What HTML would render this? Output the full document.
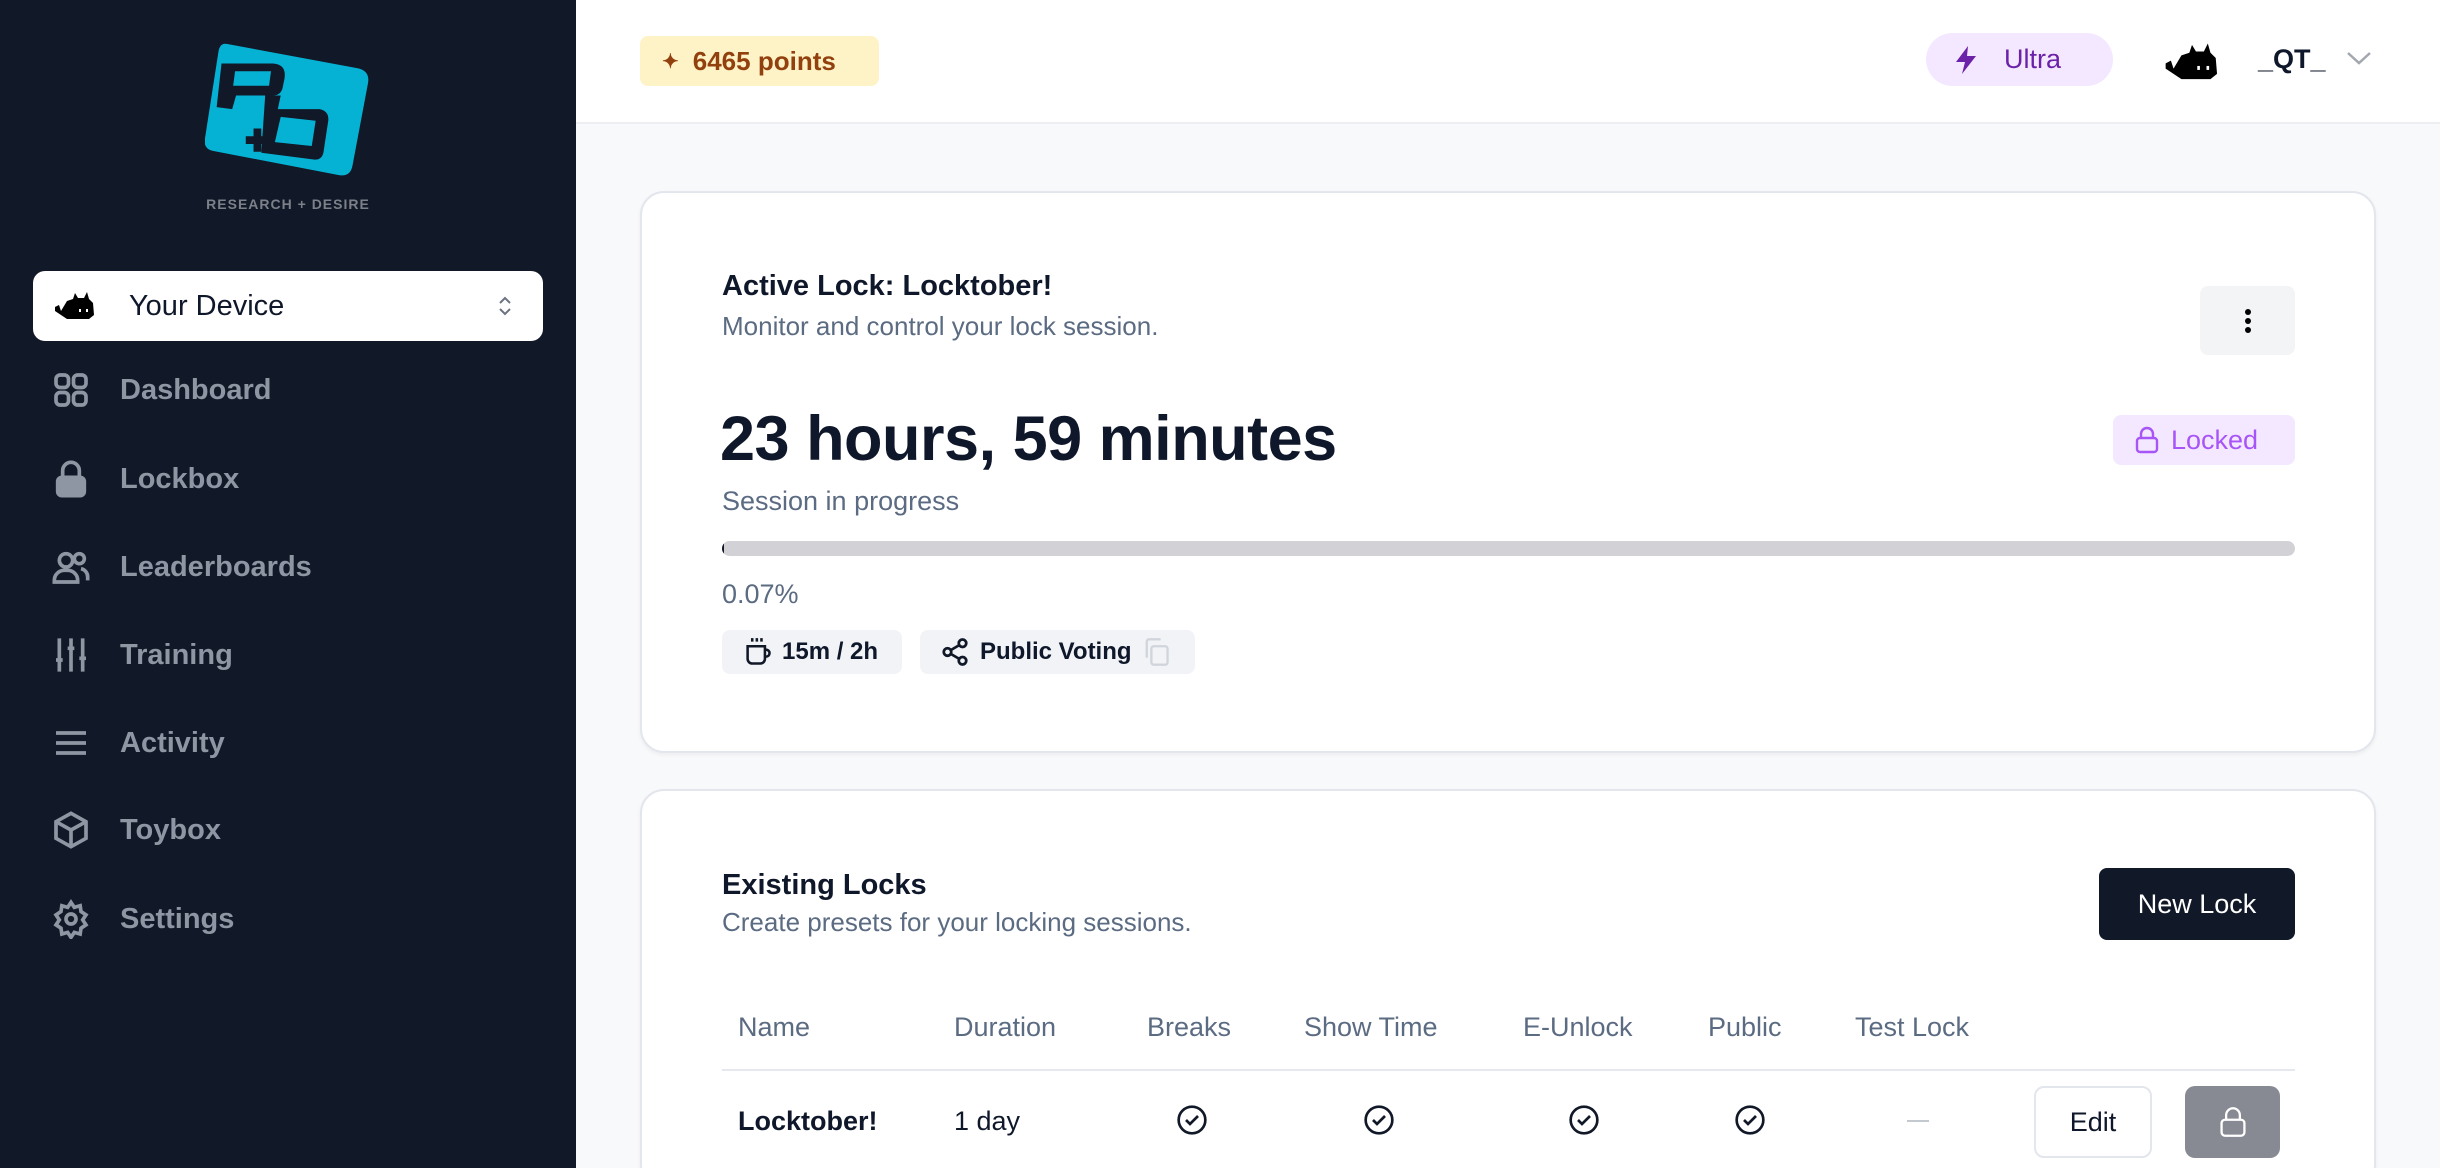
<!DOCTYPE html>
<html style="width:2440px;height:1168px;overflow:hidden"><head><meta charset="utf-8"><style>
*{box-sizing:border-box;margin:0;padding:0}
body{width:2440px;height:1168px;overflow:hidden;font-family:"Liberation Sans",sans-serif;background:#f8f9fb;position:relative;color:#0f172a}
.abs{position:absolute}
#side{left:0;top:0;width:576px;height:1168px;background:#111827}
.nav{position:absolute;left:51px;height:40px;display:flex;align-items:center;color:#8f96a3;font-size:29px;font-weight:bold}
.nav svg{width:40px;height:40px;margin-right:29px;stroke:#8f96a3;fill:none;stroke-width:2.2}
#top{left:576px;top:0;width:1864px;height:124px;background:#fff;border-bottom:2px solid #eceef2}
.card{position:absolute;left:640px;width:1736px;background:#fff;border:2px solid #e3e6ec;border-radius:24px;box-shadow:0 2px 4px rgba(0,0,0,.05)}
.th{position:absolute;top:1012px;font-size:27px;color:#5b6b82}
.chk{position:absolute;top:1104px;width:32px;height:32px}
</style></head><body>
<div id="side" class="abs">
 <svg class="abs" style="left:205px;top:38px" width="165" height="148" viewBox="0 0 170 150">
  <path d="M23 5 L158 30 Q170 33 168 45 L152 130 Q150 142 138 140 L8 115 Q-2 113 0 102 L14 12 Q16 3 23 5Z" fill="#06b2d4"/>
  <path d="M12 70 L17 25 L70 25 Q84 26 82 40 L80 50 Q78 58 70 58 L32 58 L28 72 Z" fill="#111827"/>
  <path d="M31 33 L68 33 L66 48 L29 48 Z" fill="#06b2d4"/>
  <path d="M62 58 L78 58 L75 72 L118 72 Q128 74 127 84 L122 117 Q120 125 112 124 L58 117 Z" fill="#111827"/>
  <path d="M78 80 L114 84 L110 110 L72 106 Z" fill="#06b2d4"/>
  <path d="M42 100 h8 v-8 h8 v8 h8 v8 h-8 v8 h-8 v-8 h-8z" fill="#111827"/>
 </svg>
 <div class="abs" style="left:0;width:576px;top:196px;text-align:center;color:#7b8089;font-size:14px;font-weight:bold;letter-spacing:1px">RESEARCH + DESIRE</div>
 <div class="abs" style="left:33px;top:271px;width:510px;height:70px;background:#fff;border-radius:12px;display:flex;align-items:center">
  <svg style="margin-left:20px" width="44" height="30" viewBox="0 0 44 30"><path d="M2 16 L6 14 L8 20 L14 10 L20 8 L22 2 L25 7 L31 7 L34 1 L36 8 L40 12 L41 24 L36 28 L14 28 L8 24 L2 20Z" fill="#000"/><rect x="26" y="18" width="2" height="3" fill="#fff"/><rect x="33" y="18" width="2" height="3" fill="#fff"/></svg>
  <span style="margin-left:32px;font-size:29px;color:#0f172a">Your Device</span>
  <svg style="position:absolute;right:30px" width="16" height="24" viewBox="0 0 16 24" fill="none" stroke="#6b7280" stroke-width="2"><path d="M3 9 L8 4 L13 9 M3 15 L8 20 L13 15"/></svg>
 </div>
 <div class="nav" style="top:370px"><svg viewBox="0 0 24 24"><rect x="3" y="3" width="7.5" height="7.5" rx="2.5"/><rect x="13.5" y="3" width="7.5" height="7.5" rx="2.5"/><rect x="3" y="13.5" width="7.5" height="7.5" rx="2.5"/><rect x="13.5" y="13.5" width="7.5" height="7.5" rx="2.5"/></svg>Dashboard</div>
 <div class="nav" style="top:459px"><svg viewBox="0 0 24 24"><path d="M7 11V7a5 5 0 0 1 10 0v4" /><rect x="4" y="11" width="16" height="11" rx="2.5" fill="#8f96a3"/></svg>Lockbox</div>
 <div class="nav" style="top:547px"><svg viewBox="0 0 24 24"><circle cx="9" cy="8" r="4"/><path d="M2 21v-1a6 6 0 0 1 6-6h2a6 6 0 0 1 6 6v1z"/><circle cx="17" cy="7" r="3"/><path d="M18 13a5 5 0 0 1 4 5v2"/></svg>Leaderboards</div>
 <div class="nav" style="top:635px"><svg viewBox="0 0 24 24"><path d="M5 2v20M12 2v20M19 2v20"/><path d="M3 15h4M10 8h4M17 14h4"/></svg>Training</div>
 <div class="nav" style="top:723px"><svg viewBox="0 0 24 24"><path d="M3 6h18M3 12h18M3 18h18"/></svg>Activity</div>
 <div class="nav" style="top:810px"><svg viewBox="0 0 24 24"><path d="M12 2l9 5v10l-9 5-9-5V7z"/><path d="M3 7l9 5 9-5M12 12v10"/></svg>Toybox</div>
 <div class="nav" style="top:899px"><svg viewBox="0 0 24 24"><circle cx="12" cy="12" r="3"/><path d="M12 2l2 3 3.5-1 .5 3.5 3 2-2 3 2 3-3 2-.5 3.5-3.5-1-2 3-2-3-3.5 1-.5-3.5-3-2 2-3-2-3 3-2 .5-3.5 3.5 1z"/></svg>Settings</div>
</div>
<div id="top" class="abs">
 <div class="abs" style="left:64px;top:36px;width:239px;height:50px;background:#fef3c7;border-radius:8px;display:flex;align-items:center;color:#92400e;font-size:26px;font-weight:bold"><span style="margin-left:22px;margin-right:14px;font-size:20px">✦</span>6465 points</div>
 <div class="abs" style="left:1350px;top:33px;width:187px;height:53px;background:#f3e8ff;border-radius:27px;display:flex;align-items:center;color:#6b21a8;font-size:27px">
  <svg style="margin-left:28px;margin-right:26px" width="24" height="30" viewBox="0 0 24 30"><path d="M14 1 L2 17 L11 17 L8 29 L22 11 L13 11 Z" fill="#6b21a8"/></svg>Ultra</div>
 <svg class="abs" style="left:1587px;top:42px" width="58" height="40" viewBox="0 0 44 30"><path d="M2 16 L6 14 L8 20 L14 10 L20 8 L22 2 L25 7 L31 7 L34 1 L36 8 L40 12 L41 24 L36 28 L14 28 L8 24 L2 20Z" fill="#000"/><rect x="26" y="18" width="2" height="3" fill="#fff"/><rect x="33" y="18" width="2" height="3" fill="#fff"/></svg>
 <div class="abs" style="left:1682px;top:44px;font-size:27px;font-weight:bold;color:#0f172a">_QT_</div>
 <svg class="abs" style="left:1770px;top:50px" width="26" height="16" viewBox="0 0 26 16" fill="none" stroke="#a3a7b0" stroke-width="2.5"><path d="M2 3 L13 13 L24 3"/></svg>
</div>
<div class="card" style="top:191px;height:562px">
 <div class="abs" style="left:80px;top:77px;font-size:29px;font-weight:bold">Active Lock: Locktober!</div>
 <div class="abs" style="left:80px;top:118px;font-size:26px;color:#5b6b82">Monitor and control your lock session.</div>
 <div class="abs" style="left:1558px;top:93px;width:95px;height:69px;background:#f3f4f6;border-radius:8px;display:flex;align-items:center;justify-content:center"><svg width="8" height="26"><circle cx="4" cy="4" r="3"/><circle cx="4" cy="13" r="3"/><circle cx="4" cy="22" r="3"/></svg></div>
 <div class="abs" style="left:78px;top:210px;font-size:63px;font-weight:bold;letter-spacing:-.5px">23 hours, 59 minutes</div>
 <div class="abs" style="left:80px;top:293px;font-size:27px;color:#5b6b82">Session in progress</div>
 <div class="abs" style="left:1471px;top:222px;width:182px;height:50px;background:#f3e8ff;border-radius:8px;display:flex;align-items:center;color:#a855f7;font-size:27px"><svg style="margin-left:22px;margin-right:12px" width="24" height="28" viewBox="0 0 24 28" fill="none" stroke="#a855f7" stroke-width="2.4"><path d="M6 12V8a6 6 0 0 1 12 0v4"/><rect x="2" y="12" width="20" height="14" rx="3"/></svg>Locked</div>
 <div class="abs" style="left:80px;top:348px;width:1573px;height:15px;background:#d1d1d6;border-radius:8px;overflow:hidden"><div style="width:2px;height:15px;background:#111827"></div></div>
 <div class="abs" style="left:80px;top:386px;font-size:27px;color:#5b6b82">0.07%</div>
 <div class="abs" style="left:80px;top:437px;width:180px;height:44px;background:#f1f3f7;border-radius:8px;display:flex;align-items:center;font-size:24px;font-weight:bold"><svg style="margin-left:22px;margin-right:10px" width="28" height="30" viewBox="0 0 24 26" fill="none" stroke="#111827" stroke-width="2.2"><path d="M7 1v3M11 1v3M15 1v3"/><path d="M3 8h15v11a4 4 0 0 1-4 4H7a4 4 0 0 1-4-4z"/><path d="M18 11h1a3 3 0 0 1 0 6h-1"/></svg>15m / 2h</div>
 <div class="abs" style="left:278px;top:437px;width:275px;height:44px;background:#f1f3f7;border-radius:8px;display:flex;align-items:center;font-size:24px;font-weight:bold"><svg style="margin-left:20px;margin-right:10px" width="30" height="30" viewBox="0 0 24 24" fill="none" stroke="#111827" stroke-width="2.2"><circle cx="18" cy="5" r="3"/><circle cx="6" cy="12" r="3"/><circle cx="18" cy="19" r="3"/><path d="M8.6 13.5l6.8 4M15.4 6.5l-6.8 4"/></svg>Public Voting<svg style="margin-left:10px" width="28" height="30" viewBox="0 0 24 26" fill="none" stroke="#d1d5db" stroke-width="2"><rect x="8" y="8" width="14" height="16" rx="2"/><path d="M4 18V4a2 2 0 0 1 2-2h10"/></svg></div>
</div>
<div class="card" style="top:789px;height:400px">
 <div class="abs" style="left:80px;top:78px;font-size:29px;font-weight:bold">Existing Locks</div>
 <div class="abs" style="left:80px;top:116px;font-size:26px;color:#5b6b82">Create presets for your locking sessions.</div>
 <div class="abs" style="left:1457px;top:77px;width:196px;height:72px;background:#111827;border-radius:8px;color:#fff;font-size:27px;display:flex;align-items:center;justify-content:center">New Lock</div>
 <div class="abs" style="left:80px;top:278px;width:1573px;height:2px;background:#e5e8ee"></div>
</div>
<div class="th" style="left:738px">Name</div>
<div class="th" style="left:954px">Duration</div>
<div class="th" style="left:1147px">Breaks</div>
<div class="th" style="left:1304px">Show Time</div>
<div class="th" style="left:1523px">E-Unlock</div>
<div class="th" style="left:1708px">Public</div>
<div class="th" style="left:1855px">Test Lock</div>
<div class="abs" style="left:738px;top:1106px;font-size:27px;font-weight:bold">Locktober!</div>
<div class="abs" style="left:954px;top:1106px;font-size:27px">1 day</div>
<svg class="chk" style="left:1176px" viewBox="0 0 24 24" fill="none" stroke="#111827" stroke-width="2"><circle cx="12" cy="12" r="10"/><path d="M7.5 12l3 3 6-6"/></svg>
<svg class="chk" style="left:1363px" viewBox="0 0 24 24" fill="none" stroke="#111827" stroke-width="2"><circle cx="12" cy="12" r="10"/><path d="M7.5 12l3 3 6-6"/></svg>
<svg class="chk" style="left:1568px" viewBox="0 0 24 24" fill="none" stroke="#111827" stroke-width="2"><circle cx="12" cy="12" r="10"/><path d="M7.5 12l3 3 6-6"/></svg>
<svg class="chk" style="left:1734px" viewBox="0 0 24 24" fill="none" stroke="#111827" stroke-width="2"><circle cx="12" cy="12" r="10"/><path d="M7.5 12l3 3 6-6"/></svg>
<div class="abs" style="left:1907px;top:1120px;width:22px;height:2px;background:#c4c8cf"></div>
<div class="abs" style="left:2034px;top:1086px;width:118px;height:72px;background:#fff;border:2px solid #e3e6ec;border-radius:10px;display:flex;align-items:center;justify-content:center;font-size:27px">Edit</div>
<div class="abs" style="left:2185px;top:1086px;width:95px;height:72px;background:#878a92;border-radius:10px;display:flex;align-items:center;justify-content:center"><svg width="30" height="32" viewBox="0 0 24 28" fill="none" stroke="#fff" stroke-width="2"><path d="M6 12V8a6 6 0 0 1 12 0v4"/><rect x="2" y="12" width="20" height="14" rx="3"/></svg></div>
</body></html>
